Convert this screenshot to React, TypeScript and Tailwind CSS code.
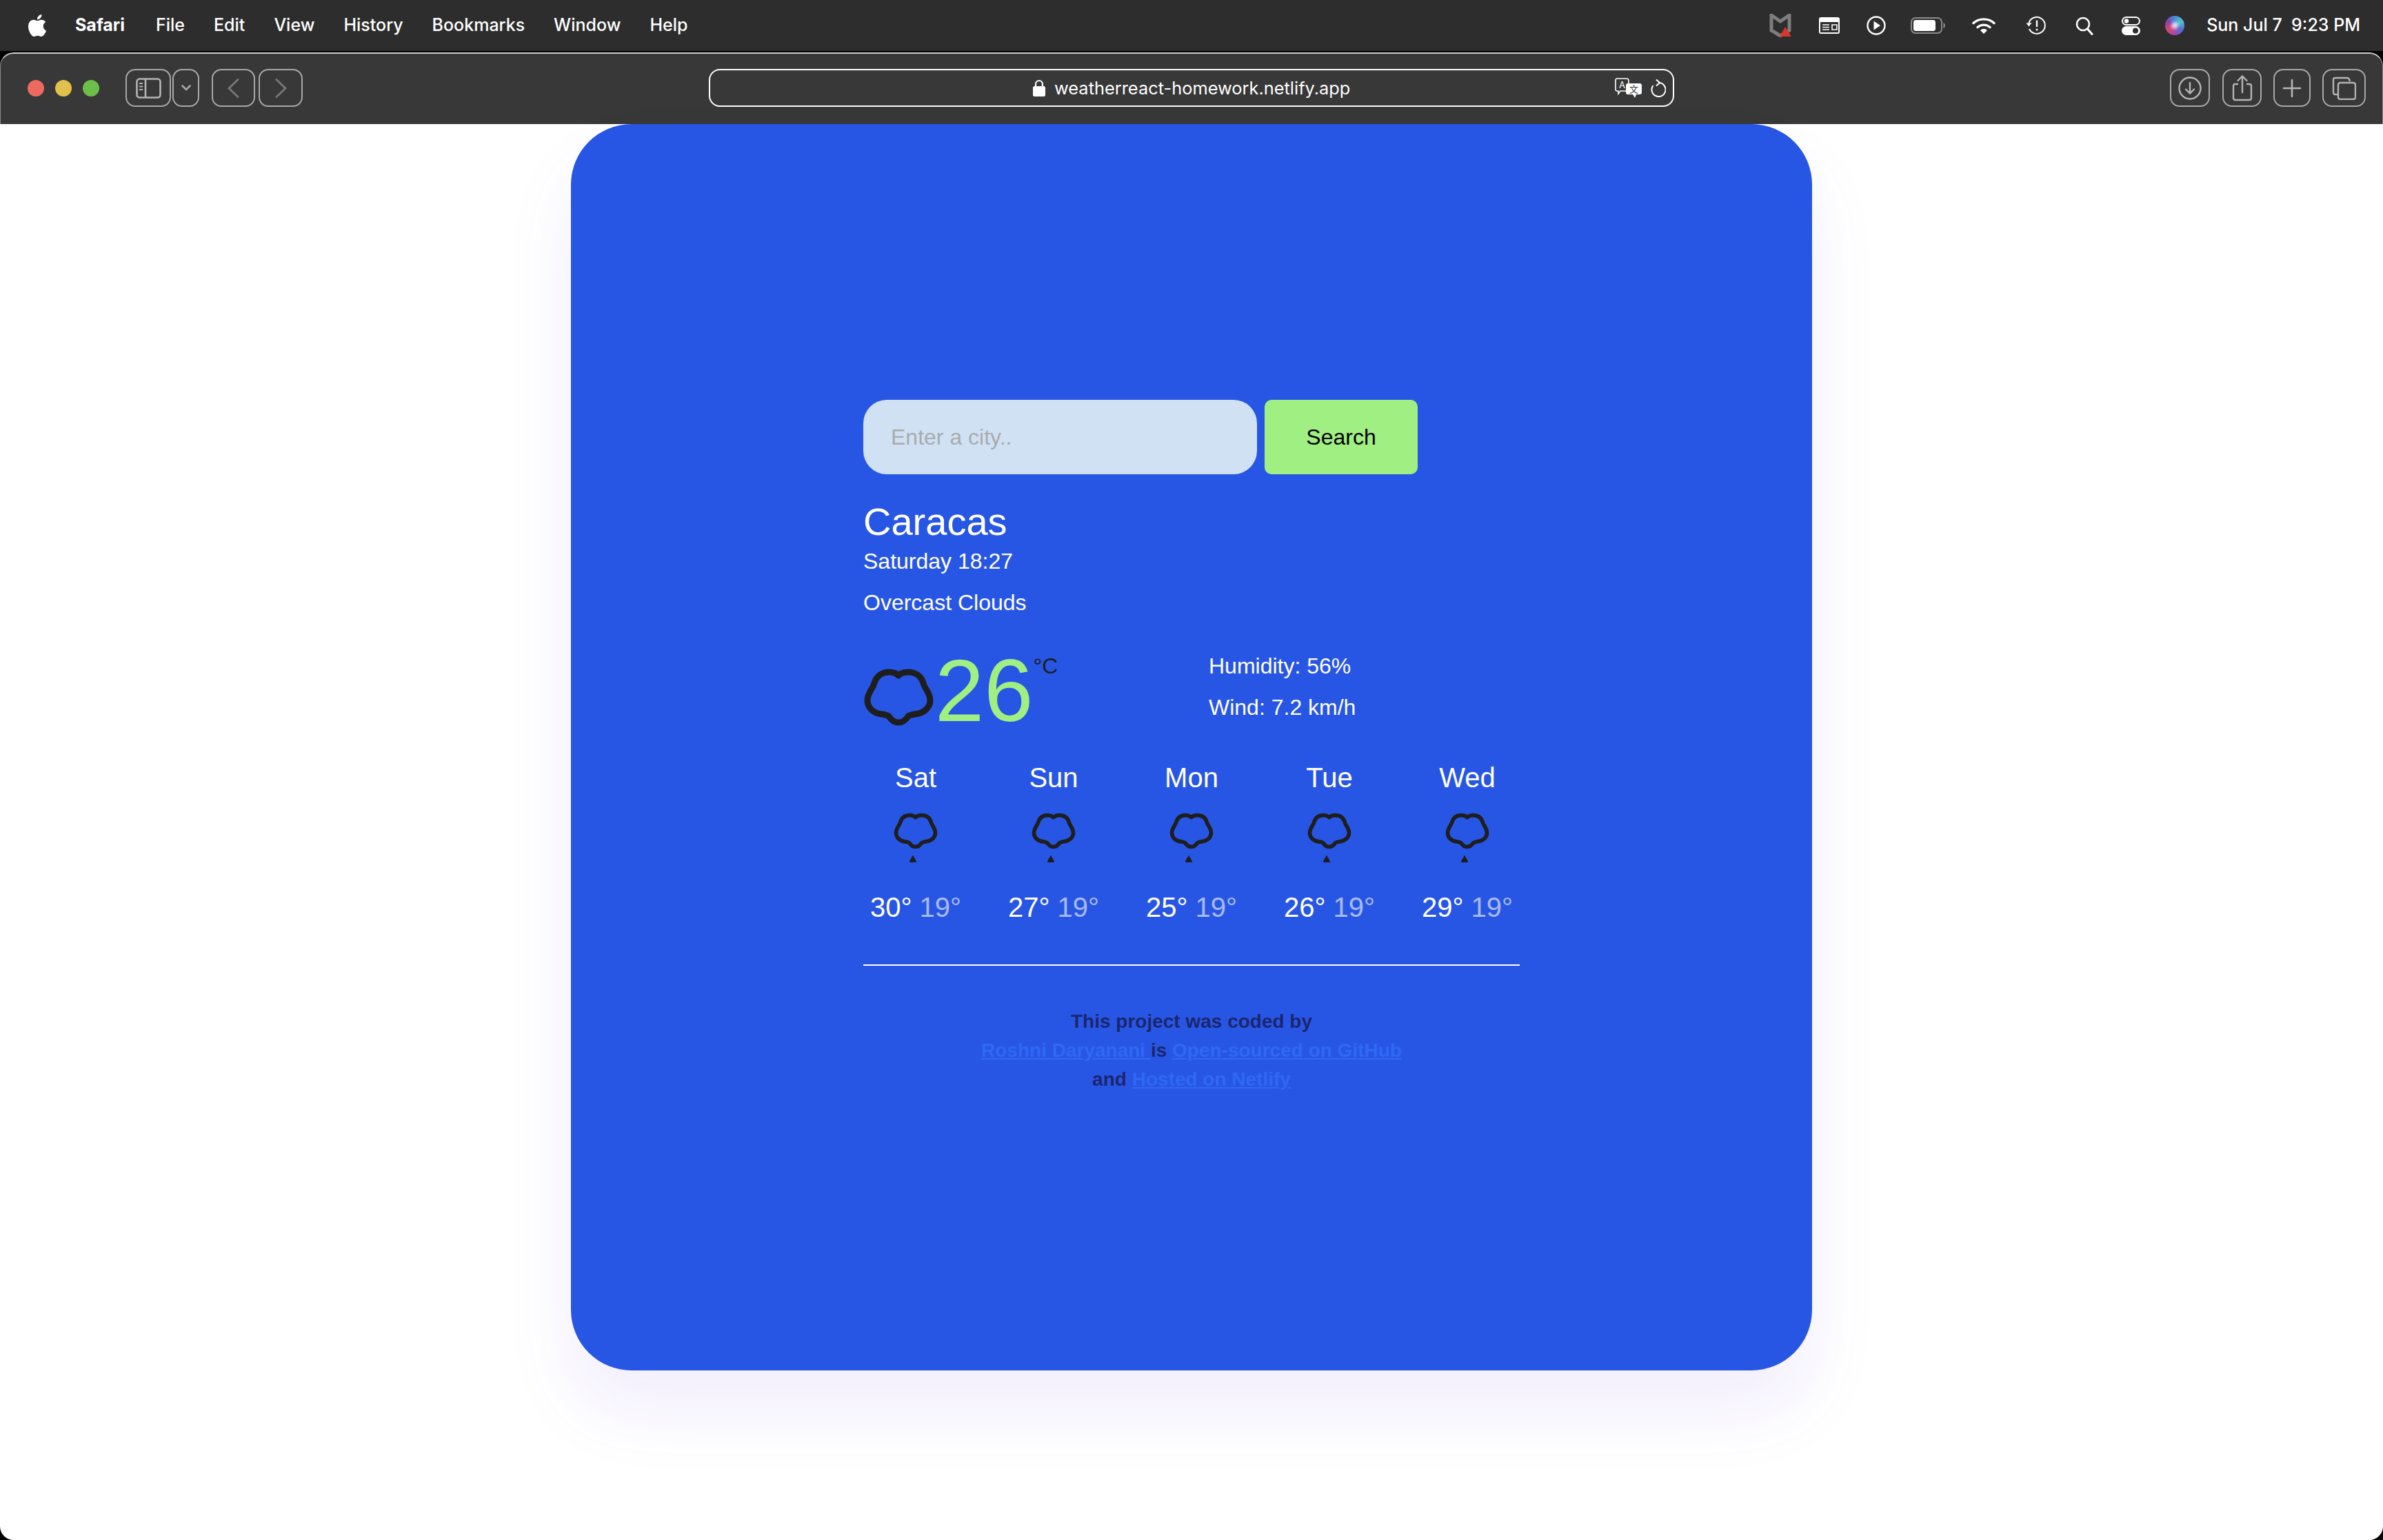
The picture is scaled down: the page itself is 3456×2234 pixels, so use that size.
import { SiApple } from "react-icons/si";

const CLOUD_PATH =
  "M51 38C47 34 43 33 38 33C27 33 19 39 16 49C14 57 6 63 6 74C6 85 15 93 27 94C31 94.5 34 95 37 97C40 102 45 106 51 106C57 106 62 102 65 97C68 95 71 94.5 75 94C87 93 97 85 97 74C97 63 89 57 87 49C84 39 76 33 65 33C60 33 55 34 51 38Z";

const forecast = [
  { day: "Sat", max: 30, min: 19 },
  { day: "Sun", max: 27, min: 19 },
  { day: "Mon", max: 25, min: 19 },
  { day: "Tue", max: 26, min: 19 },
  { day: "Wed", max: 29, min: 19 },
];

const menus = ["File", "Edit", "View", "History", "Bookmarks", "Window", "Help"];

function ToolButton({ className, children }: { className: string; children?: React.ReactNode }) {
  return (
    <div className={`flex h-[55px] items-center justify-center rounded-[14px] border-2 border-[#a8a8a8] ${className}`}>
      {children}
    </div>
  );
}

function StatusIcons() {
  return (
    <>
      {/* shield */}
      <svg className="h-[34px] w-[33px]" viewBox="0 0 33 34">
        <path d="M3 2L16 11L29 2V24L16 32L3 24Z" fill="none" stroke="#7d7d7d" strokeWidth="5" />
        <path d="M23 19L32 33H15Z" fill="#d8352c" />
      </svg>
      {/* keyboard viewer */}
      <svg className="ml-[39px] h-[24px] w-[30px]" viewBox="0 0 30 24">
        <rect width="30" height="24" rx="3" fill="#fff" />
        <rect x="2" y="7" width="26" height="15" fill="#2d2d2d" />
        <path d="M5 11H15M5 14.5H15M5 18H15" stroke="#fff" strokeWidth="1.6" />
        <path d="M19 11H26V18H19Z" fill="none" stroke="#fff" strokeWidth="1.6" />
      </svg>
      <svg className="ml-[39px] h-[28px] w-[28px]" viewBox="0 0 28 28">
        <circle cx="14" cy="14" r="12.5" fill="none" stroke="#fff" strokeWidth="2.4" />
        <path d="M10.5 7.5L20 14L10.5 20.5Z" fill="#fff" />
      </svg>
      {/* battery */}
      <svg className="ml-[36px] h-[24px] w-[50px]" viewBox="0 0 50 24">
        <rect x="1" y="1" width="44" height="22" rx="6" fill="none" stroke="#8a8a8a" strokeWidth="2" />
        <rect x="4" y="4" width="32" height="16" rx="3.5" fill="#fff" />
        <path d="M47.5 8C49.5 9 50 10.5 50 12C50 13.5 49.5 15 47.5 16Z" fill="#8a8a8a" />
      </svg>
      {/* wifi */}
      <svg className="ml-[39px] h-[24px] w-[34px]" viewBox="0 0 34 24">
        <path d="M2 8.5C10 1 24 1 32 8.5" fill="none" stroke="#fff" strokeWidth="3.4" strokeLinecap="round" />
        <path d="M8 14.5C13 10 21 10 26 14.5" fill="none" stroke="#fff" strokeWidth="3.4" strokeLinecap="round" />
        <path d="M12 19C15 16 19 16 22 19L17 24Z" fill="#fff" />
      </svg>
      {/* time machine */}
      <svg className="ml-[44px] h-[28px] w-[29px]" viewBox="0 0 29 28">
        <path d="M4.5 10A12 12 0 1 1 5 19" fill="none" stroke="#fff" strokeWidth="2" />
        <path d="M0.5 10.5L8.5 10L4.5 15.5Z" fill="#fff" />
        <path d="M16 6.5V16" stroke="#fff" strokeWidth="2.4" />
        <circle cx="16" cy="20" r="1.5" fill="#fff" />
      </svg>
      {/* search */}
      <svg className="ml-[43px] h-[27px] w-[26px]" viewBox="0 0 26 27">
        <circle cx="11" cy="11" r="9" fill="none" stroke="#fff" strokeWidth="2.6" />
        <path d="M17.5 18L24 25.5" stroke="#fff" strokeWidth="3" strokeLinecap="round" />
      </svg>
      {/* control center */}
      <svg className="ml-[41px] h-[27px] w-[27px]" viewBox="0 0 27 27">
        <rect x="1" y="1" width="25" height="11" rx="5.5" fill="none" stroke="#fff" strokeWidth="2" />
        <circle cx="7" cy="6.5" r="3.2" fill="#fff" />
        <rect y="14" width="27" height="13" rx="6.5" fill="#fff" />
        <circle cx="20" cy="20.5" r="4" fill="#2d2d2d" />
      </svg>
      {/* siri */}
      <div className="ml-[36px] h-[28px] w-[28px] rounded-full bg-[conic-gradient(#3f8fd8,#57c1c9,#4d6fd0,#a845a8,#d8476b,#8a3fae,#3f8fd8)] p-[9px]">
        <div className="h-full w-full rounded-full bg-[#e8d8ee] blur-[2px]" />
      </div>
    </>
  );
}

function Browser() {
  return (
    <div className="flex h-[104px] items-center rounded-t-[20px] border-x border-t-2 border-x-[#8a8a8a] border-t-[#cfcfcf] bg-[#383838] pb-[3px] pl-[39px]">
      <div className="h-[24px] w-[24px] rounded-full bg-[#ee6a5f]" />
      <div className="ml-[16px] h-[24px] w-[24px] rounded-full bg-[#e2c04c]" />
      <div className="ml-[16px] h-[24px] w-[24px] rounded-full bg-[#6cbf49]" />

      <ToolButton className="ml-[38px] w-[66px]">
        <svg className="h-[30px] w-[37px]" viewBox="0 0 37 30" fill="none" stroke="#b5b5b5" strokeWidth="2.6">
          <rect x="1.5" y="1.5" width="34" height="27" rx="4" />
          <path d="M14 1.5V28.5" />
          <path d="M5 8H10M5 12.5H10M5 17H10" strokeWidth="2" />
        </svg>
      </ToolButton>
      <ToolButton className="ml-[2px] w-[39px]">
        <svg className="h-[9px] w-[14px]" viewBox="0 0 14 9" fill="none" stroke="#a8a8a8" strokeWidth="2.6" strokeLinecap="round">
          <path d="M1.5 1.5L7 7L12.5 1.5" />
        </svg>
      </ToolButton>
      <ToolButton className="ml-[18px] w-[63px]">
        <svg className="h-[28px] w-[17px]" viewBox="0 0 17 28" fill="none" stroke="#787878" strokeWidth="2.8" strokeLinecap="round">
          <path d="M15 1.5L2 14L15 26.5" />
        </svg>
      </ToolButton>
      <ToolButton className="ml-[5px] w-[64px]">
        <svg className="h-[28px] w-[17px]" viewBox="0 0 17 28" fill="none" stroke="#787878" strokeWidth="2.8" strokeLinecap="round">
          <path d="M2 1.5L15 14L2 26.5" />
        </svg>
      </ToolButton>

      <div className="ml-[589px] flex h-[55px] w-[1400px] items-center rounded-[16px] border-2 border-white pl-[468px]">
        <svg className="h-[25px] w-[18px]" viewBox="0 0 18 25">
          <path d="M4 11V7A5 5 0 0 1 14 7V11" fill="none" stroke="#fff" strokeWidth="2.2" />
          <rect y="10" width="18" height="15" rx="2.5" fill="#fff" />
        </svg>
        <span className="ml-[13px] font-['Inter',sans-serif] text-[25.4px] leading-none text-white">
          weatherreact-homework.netlify.app
        </span>
        <svg className="ml-auto h-[29px] w-[39px]" viewBox="0 0 39 29">
          <path d="M3 1H17Q20 1 20 4V16Q20 19 17 19H8L5 23V19H3Q0.8 19 1 16V4Q1 1 3 1Z" fill="#383838" stroke="#fff" strokeWidth="1.6" />
          <text x="10.5" y="15" textAnchor="middle" fontSize="13" fontFamily="Inter, sans-serif" fill="#fff">A</text>
          <path d="M19 8H36Q39 8 39 11V21Q39 24 36 24H31L29 29L26 24H19Q16 24 16 21V11Q16 8 19 8Z" fill="#fff" />
          <text x="27.5" y="21" textAnchor="middle" fontSize="13" fontFamily="Noto Sans CJK SC, sans-serif" fill="#383838">文</text>
        </svg>
        <svg className="ml-[13px] mr-[10px] h-[27px] w-[22px]" viewBox="0 0 22 27" fill="none" stroke="#fff" strokeWidth="2">
          <path d="M12 6A10 10 0 1 1 3.5 10" />
          <path d="M8 1.5L13 6L8 10.5" />
        </svg>
      </div>

      <ToolButton className="ml-[719px] w-[58px]">
        <svg className="h-[34px] w-[34px]" viewBox="0 0 34 34" fill="none" stroke="#b5b5b5" strokeWidth="2.4">
          <circle cx="17" cy="17" r="15.5" />
          <path d="M17 9V24M11 18.5L17 24.5L23 18.5" strokeLinecap="round" />
        </svg>
      </ToolButton>
      <ToolButton className="ml-[18px] w-[57px]">
        <svg className="h-[38px] w-[30px]" viewBox="0 0 30 38" fill="none" stroke="#b5b5b5" strokeWidth="2.4">
          <path d="M9 13H5Q2 13 2 16V33Q2 36 5 36H25Q28 36 28 33V16Q28 13 25 13H21" />
          <path d="M15 25V2M8.5 8L15 1.5L21.5 8" strokeLinecap="round" />
        </svg>
      </ToolButton>
      <ToolButton className="ml-[17px] w-[54px]">
        <svg className="h-[28px] w-[28px]" viewBox="0 0 28 28" stroke="#b5b5b5" strokeWidth="2.6" strokeLinecap="round">
          <path d="M14 2V26M2 14H26" />
        </svg>
      </ToolButton>
      <ToolButton className="ml-[17px] w-[63px]">
        <svg className="h-[34px] w-[35px]" viewBox="0 0 35 34" fill="none" stroke="#b5b5b5" strokeWidth="2.4">
          <path d="M8 26H5Q2 26 2 23V5Q2 2 5 2H22Q25 2 26 7" />
          <rect x="9" y="9" width="25" height="24" rx="3" />
        </svg>
      </ToolButton>
    </div>
  );
}

function WeatherCard() {
  return (
    <div className="mx-auto h-[1808px] w-[1800px] rounded-[88px] bg-[#2856e4] pl-[424px] pt-[400px] font-['Liberation_Sans',Arial,sans-serif] shadow-[0_60px_100px_rgba(100,60,230,0.085)]">
      <div className="w-[952px]">
        <form className="flex h-[108px]">
          <input
            type="search"
            placeholder="Enter a city.."
            className="w-[571px] rounded-[34px] bg-[#d0e1f4] pl-[40px] text-[32px] text-black outline-none placeholder:text-[#a9abad]"
          />
          <button type="button" className="ml-[11px] w-[222px] rounded-[10px] bg-[#a0ef82] text-[32px] text-black">
            Search
          </button>
        </form>

        <h1 className="mt-[35px] text-[56px] leading-[67px] text-white">Caracas</h1>
        <p className="text-[32px] leading-[48px] text-white">Saturday 18:27</p>
        <p className="mt-[12px] text-[32px] leading-[48px] text-white">Overcast Clouds</p>

        <div className="mt-[44px] flex h-[108px]">
          <div className="flex w-[501px] items-start">
            <svg className="h-[108px] w-[104px] shrink-0 overflow-visible blur-[0.6px]" viewBox="0 0 104 108">
              <path d={CLOUD_PATH} fill="none" stroke="#1e1e1e" strokeWidth="9" strokeLinejoin="round" />
            </svg>
            <span className="-mt-[4px] text-[128px] leading-none text-[#a0ef82]">26</span>
            <span className="text-[32px] leading-[48px] text-[#1e1e1e]">°C</span>
          </div>
          <div className="text-[32px] leading-[48px] text-white">
            <p>Humidity: 56%</p>
            <p className="mt-[12px]">Wind: 7.2 km/h</p>
          </div>
        </div>

        <div className="-ml-[24px] mt-[48px] grid w-[1000px] grid-cols-5 text-center text-[40px] leading-[60px] text-white">
          {forecast.map((item) => (
            <div key={item.day}>
              <div>{item.day}</div>
              <div className="flex h-[128px] flex-col items-center pt-[22px]">
                <svg className="h-[51px] w-[62px] overflow-visible blur-[0.6px]" viewBox="2 29 99 81">
                  <path d={CLOUD_PATH} fill="none" stroke="#1e1e1e" strokeWidth="9" strokeLinejoin="round" />
                </svg>
                <svg className="mt-[9px] h-[11px] w-[10px] -translate-x-[4px]" viewBox="0 0 10 11">
                  <path d="M5 0C6 4 10 7 10 11H0C0 7 4 4 5 0Z" fill="#1e1e1e" />
                </svg>
              </div>
              <div>
                {item.max}° <span className="text-white/60">{item.min}°</span>
              </div>
            </div>
          ))}
        </div>

        <hr className="mt-[53px] border-t-2 border-white" />

        <footer className="mt-[60px] text-center text-[28px] font-bold leading-[42px] text-[#1b2670]">
          <div>This project was coded by</div>
          <div>
            <a href="#" className="text-[#2f68f5] underline">Roshni Daryanani </a>
            is{" "}
            <a href="#" className="text-[#2f68f5] underline">Open-sourced on GitHub</a>
          </div>
          <div>
            and <a href="#" className="text-[#2f68f5] underline">Hosted on Netlify</a>
          </div>
        </footer>
      </div>
    </div>
  );
}

export default function App() {
  return (
    <div className="h-[2234px] w-[3456px] overflow-hidden bg-black">
      <div className="flex h-[74px] items-center bg-[#2d2d2d] pl-[38px] pr-[33px] font-['Inter',sans-serif] text-[25px] font-medium text-white">
        <SiApple className="h-[32px] w-[32px]" />
        <span className="ml-[39px] font-bold">Safari</span>
        <div className="ml-[45px] flex gap-[42px]">
          {menus.map((menu) => (
            <span key={menu}>{menu}</span>
          ))}
        </div>
        <div className="ml-auto flex items-center">
          <StatusIcons />
          <span className="ml-[32px]">Sun Jul 7&nbsp; 9:23 PM</span>
        </div>
      </div>
      <div className="h-[2px]" />
      <Browser />
      <div className="h-[2054px] rounded-b-[20px] bg-white">
        <WeatherCard />
      </div>
    </div>
  );
}
